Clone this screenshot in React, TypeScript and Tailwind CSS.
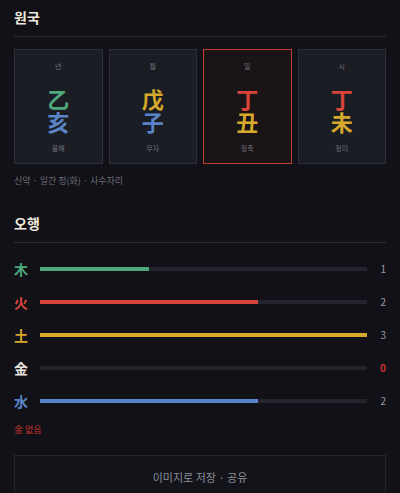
const pillars = [
  { label: "년", stem: "乙", stemColor: "text-[#4fa87c]", branch: "亥", branchColor: "text-[#5a84c8]", name: "을해", active: false },
  { label: "월", stem: "戊", stemColor: "text-[#d6a92c]", branch: "子", branchColor: "text-[#5a84c8]", name: "무자", active: false },
  { label: "일", stem: "丁", stemColor: "text-[#d9453b]", branch: "丑", branchColor: "text-[#d6a92c]", name: "정축", active: true },
  { label: "시", stem: "丁", stemColor: "text-[#d9453b]", branch: "未", branchColor: "text-[#d6a92c]", name: "정미", active: false },
];

const elements = [
  { char: "木", color: "text-[#4fa87c]", bar: "bg-[#4fa87c]", count: 1 },
  { char: "火", color: "text-[#d9453b]", bar: "bg-[#d9453b]", count: 2 },
  { char: "土", color: "text-[#d6a92c]", bar: "bg-[#d6a92c]", count: 3 },
  { char: "金", color: "text-[#e8e6e0]", bar: "bg-[#e8e6e0]", count: 0 },
  { char: "水", color: "text-[#5a84c8]", bar: "bg-[#5a84c8]", count: 2 },
];

const font = "font-['Noto_Sans_CJK_KR','Noto_Sans',sans-serif]";

export default function App() {
  return (
    <div className={`h-[493px] w-[400px] overflow-hidden bg-[#111117] px-[14px] pt-[7px] ${font}`}>
      <h2 className="text-[14px] font-bold leading-[20px] text-[#efe9dc]">원국</h2>
      <div className="mt-[9px] h-px bg-[#2a2c33]" />

      <div className="mt-[12px] grid grid-cols-4 gap-[6px]">
        {pillars.map((p) => (
          <div
            key={p.label}
            className={`flex h-[115px] flex-col items-center border pt-[10px] ${
              p.active ? "border-[#c23d32] bg-[#1a1416]" : "border-[#2b2f38] bg-[#1a1d24]"
            }`}
          >
            <span className="text-[7px] leading-[12px] text-[#6f717a]">{p.label}</span>
            <span className={`mt-[15px] text-[22px] font-bold leading-[23px] ${p.stemColor}`}>{p.stem}</span>
            <span className={`text-[22px] font-bold leading-[23px] ${p.branchColor}`}>{p.branch}</span>
            <span className="mt-[9px] text-[7px] leading-[12px] text-[#6f717a]">{p.name}</span>
          </div>
        ))}
      </div>

      <p className="mt-[10px] text-[9px] leading-[14px] text-[#6c6e76]">신약 · 일간 정(화) · 사수자리</p>

      <h2 className="mt-[25px] text-[14px] font-bold leading-[20px] text-[#efe9dc]">오행</h2>
      <div className="mt-[9px] h-px bg-[#2a2c33]" />

      <div className="mt-[18px] flex flex-col gap-[17px]">
        {elements.map((e) => (
          <div key={e.char} className="flex h-[16px] items-center">
            <span className={`w-[26px] text-[14px] font-bold leading-[16px] ${e.color}`}>{e.char}</span>
            <div className="h-[4px] flex-1 bg-[#23252c]">
              <div className={`h-full ${e.bar}`} style={{ width: `${(e.count / 3) * 100}%` }} />
            </div>
            <span
              className={`w-[19px] text-right text-[10px] leading-[16px] ${
                e.count === 0 ? "font-bold text-[#c9342c]" : "text-[#9a9ca3]"
              }`}
            >
              {e.count}
            </span>
          </div>
        ))}
      </div>

      <p className="mt-[14px] text-[9px] leading-[14px] text-[#c9342c]">金 없음</p>

      <div className="mt-[18px] flex h-[44px] items-center justify-center border border-[#24262d] bg-[#13141a]">
        <span className="text-[11px] text-[#8d8f96]">이미지로 저장 · 공유</span>
      </div>
    </div>
  );
}
